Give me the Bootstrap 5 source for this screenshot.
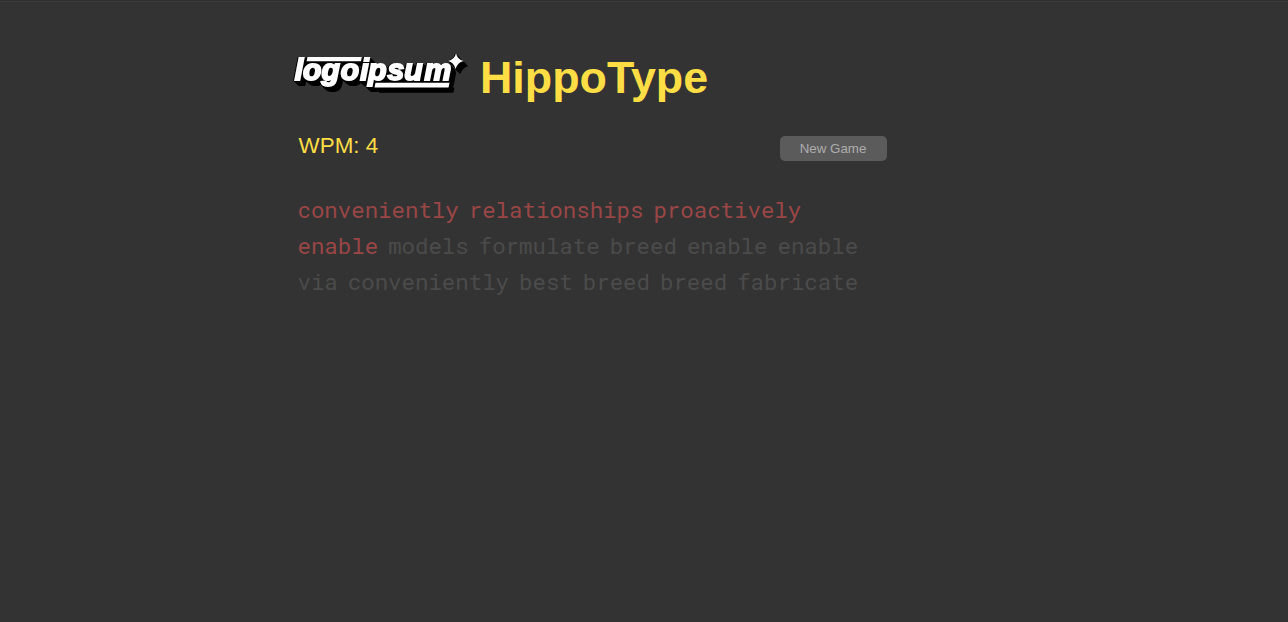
<!DOCTYPE html>
<html lang="en">
<head>
<meta charset="utf-8">
<meta name="viewport" content="width=device-width, initial-scale=1">
<title>HippoType</title>
<link href="https://cdn.jsdelivr.net/npm/bootstrap@5.3.0/dist/css/bootstrap.min.css" rel="stylesheet">
<style>
  body { background: #333; color: #ffdd44; font-family: "Liberation Sans", Arial, sans-serif; border-top: 1px solid #2f2f2f; box-shadow: inset 0 1px #3a3a3a; }
  .game { width: 700px; margin-left: 293px; padding-top: 48px; }
  .brand-title { font-size: 44.8px; line-height: 56px; font-weight: 700; margin-left: 3px; }
  .stats { width: 594px; padding-left: 5.6px; margin-top: 28px; height: 32px; }
  .wpm { font-size: 22.4px; line-height: 26px; }
  .btn-new { width: 107px; height: 25px; margin-top: 3px; padding: 0 1px 0 0; border: 0; border-radius: 5px; background: #5b5b5b; color: #adadad; font-size: 13.333px; line-height: 25px; }
  .words { width: 600px; margin: 27px 0 0 4.5px; font-family: "Roboto Mono", "Liberation Mono", monospace; font-size: 22.4px; line-height: 36px; color: #4b4b4b; }
  .words > div { column-gap: 10px; }
  .wrong { color: #9a4646; }
  .logo-word { font: italic 700 30px "Liberation Sans", Arial, sans-serif; stroke: #fff; stroke-width: 2px; }
  .logo-face { fill: #fff; filter: drop-shadow(-1px 0 0 #000) drop-shadow(1px 1px 0 #000) drop-shadow(2px 2px 0 #000) drop-shadow(2px 2px 0 #000); }
</style>
</head>
<body>
<main class="game">
  <header class="d-flex align-items-start">
    <svg width="184" height="56" viewBox="293 49 184 56" role="img" aria-label="Logo">
      <g class="logo-face">
        <path d="M307.500 57H361.800L361 61.300H306.500ZM375.500 82.700H449.500L448.500 87.500H374.500Z"/>
        <text class="logo-word" x="294.800 303 321.500 340.700 360.300 368.300 387.400 404.300 424.500" y="80.400">logoipsum</text>
        <path d="M456 53.500Q457.500 59.500 463.500 61Q457.500 62.500 455.500 69Q454 62.500 448 61Q454.500 59.500 456 53.500Z"/>
      </g>
    </svg>
    <h1 class="brand-title mb-0">HippoType</h1>
  </header>
  <div class="stats d-flex justify-content-between align-items-start">
    <div class="wpm">WPM: 4</div>
    <button class="btn btn-new" type="button">New Game</button>
  </div>
  <section class="words">
    <div class="d-flex wrong"><span>conveniently</span><span>relationships</span><span>proactively</span></div>
    <div class="d-flex"><span class="wrong">enable</span><span>models</span><span>formulate</span><span>breed</span><span>enable</span><span>enable</span></div>
    <div class="d-flex"><span>via</span><span>conveniently</span><span>best</span><span>breed</span><span>breed</span><span>fabricate</span></div>
  </section>
</main>
<script src="https://cdn.jsdelivr.net/npm/bootstrap@5.3.0/dist/js/bootstrap.bundle.min.js"></script>
</body>
</html>
